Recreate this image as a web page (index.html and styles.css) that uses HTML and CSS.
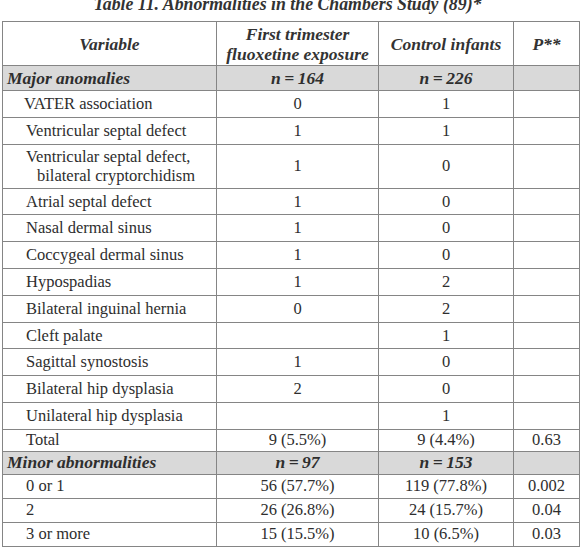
FILE: index.html
```html
<!DOCTYPE html>
<html lang="en">
<head>
	<meta charset="UTF-8">
	<title>Table 11</title>
	<link rel="stylesheet" href="styles.css">
</head>
<body>
<section class="page">
	<h2 class="caption">Table 11. Abnormalities in the Chambers Study (89)*</h2>
	<table class="data">
		<colgroup>
			<col class="c-var">
			<col class="c-exp">
			<col class="c-ctl">
			<col class="c-p">
		</colgroup>
		<thead>
			<tr class="head">
				<th>Variable</th>
				<th>First trimester<br>fluoxetine exposure</th>
				<th>Control infants</th>
				<th>P**</th>
			</tr>
		</thead>
		<tbody>
			<tr class="group">
				<td class="label">Major anomalies</td>
				<td>n&thinsp;=&thinsp;164</td>
				<td>n&thinsp;=&thinsp;226</td>
				<td></td>
			</tr>
			<tr>
				<td class="item lead">VATER association</td>
				<td>0</td>
				<td>1</td>
				<td></td>
			</tr>
			<tr>
				<td class="item">Ventricular septal defect</td>
				<td>1</td>
				<td>1</td>
				<td></td>
			</tr>
			<tr class="tall">
				<td class="item wrap">Ventricular septal defect,<br>bilateral cryptorchidism</td>
				<td>1</td>
				<td>0</td>
				<td></td>
			</tr>
			<tr>
				<td class="item">Atrial septal defect</td>
				<td>1</td>
				<td>0</td>
				<td></td>
			</tr>
			<tr>
				<td class="item">Nasal dermal sinus</td>
				<td>1</td>
				<td>0</td>
				<td></td>
			</tr>
			<tr>
				<td class="item">Coccygeal dermal sinus</td>
				<td>1</td>
				<td>0</td>
				<td></td>
			</tr>
			<tr>
				<td class="item">Hypospadias</td>
				<td>1</td>
				<td>2</td>
				<td></td>
			</tr>
			<tr>
				<td class="item">Bilateral inguinal hernia</td>
				<td>0</td>
				<td>2</td>
				<td></td>
			</tr>
			<tr>
				<td class="item">Cleft palate</td>
				<td></td>
				<td>1</td>
				<td></td>
			</tr>
			<tr>
				<td class="item">Sagittal synostosis</td>
				<td>1</td>
				<td>0</td>
				<td></td>
			</tr>
			<tr>
				<td class="item">Bilateral hip dysplasia</td>
				<td>2</td>
				<td>0</td>
				<td></td>
			</tr>
			<tr>
				<td class="item">Unilateral hip dysplasia</td>
				<td></td>
				<td>1</td>
				<td></td>
			</tr>
			<tr class="total">
				<td class="item">Total</td>
				<td>9 (5.5%)</td>
				<td>9 (4.4%)</td>
				<td>0.63</td>
			</tr>
			<tr class="group minor-head">
				<td class="label">Minor abnormalities</td>
				<td>n&thinsp;=&thinsp;97</td>
				<td>n&thinsp;=&thinsp;153</td>
				<td></td>
			</tr>
			<tr class="minor">
				<td class="item">0 or 1</td>
				<td>56 (57.7%)</td>
				<td>119 (77.8%)</td>
				<td>0.002</td>
			</tr>
			<tr class="minor">
				<td class="item">2</td>
				<td>26 (26.8%)</td>
				<td>24 (15.7%)</td>
				<td>0.04</td>
			</tr>
			<tr class="minor">
				<td class="item">3 or more</td>
				<td>15 (15.5%)</td>
				<td>10 (6.5%)</td>
				<td>0.03</td>
			</tr>
		</tbody>
	</table>
</section>
</body>
</html>
```

FILE: styles.css
```css
body, h1, h2, h3, p, table
{
	margin: 0;
	padding: 0;
}

html, body {
	width: 100%;
	background: #fff;
	font: 16.5px/1.2 "Liberation Serif", "Times New Roman", serif;
	color: #2e2e2e;
}

.page {
	padding-left: 2px;
	overflow: hidden;
}

/* 表题 */
.caption {
	margin-top: -5px;
	margin-bottom: 8px;
	padding-right: 9px;
	height: 18px;
	font-size: 17.8px;
	line-height: 18px;
	font-style: italic;
	font-weight: bold;
	text-align: center;
	color: #333;
}

/* 表格 */
.data {
	width: 577px;
	table-layout: fixed;
	border-collapse: collapse;
}
.c-var { width: 214px; }
.c-exp { width: 162px; }
.c-ctl { width: 135px; }
.c-p { width: 66px; }

.data th,
.data td {
	border: 1px solid #858585;
	padding: 0;
	text-align: center;
	vertical-align: middle;
	white-space: nowrap;
}
.data tr { height: 26.8px; }

.data .head { height: 44px; }
.head th {
	font-size: 17.5px;
	line-height: 20px;
	font-style: italic;
	font-weight: bold;
	color: #333;
}

.data .group { height: 25px; }
.group td {
	background: #d9d9d9;
	font-style: italic;
	font-weight: bold;
	font-size: 17.5px;
}
.data .label {
	text-align: left;
	padding-left: 4px;
}

.data .item {
	text-align: left;
	padding-left: 23px;
}
.data .lead { padding-left: 21px; }
.data .wrap {
	padding-left: 34px;
	text-indent: -11px;
	line-height: 19px;
}
.data .tall { height: 44px; }

.data .total { height: 22px; }
.data .minor-head { height: 23px; }
.data .minor { height: 24px; }
```
